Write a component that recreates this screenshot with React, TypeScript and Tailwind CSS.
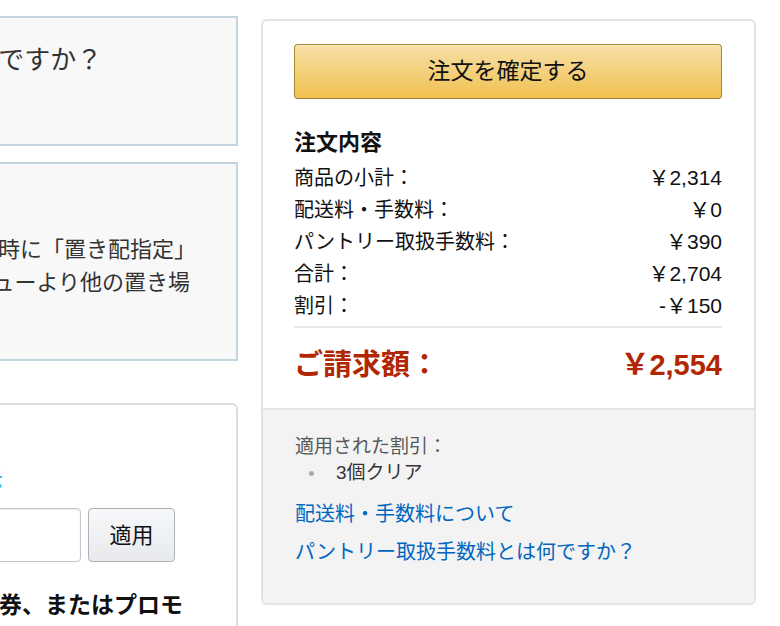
import React from "react";

const font = { fontFamily: "'Liberation Sans', 'Noto Sans CJK JP', sans-serif" };

function Row({ label, value }: { label: string; value: string }) {
  return (
    <div className="flex h-[32px] items-center justify-between">
      <span className="text-[20px] text-[#111]">{label}</span>
      <span className="text-[21px] text-[#111]">{value}</span>
    </div>
  );
}

export default function App() {
  return (
    <div style={font} className="flex h-[626px] w-[780px] overflow-hidden bg-white">
      {/* left column (partly off-screen) */}
      <div className="-ml-[240px] flex w-[478px] shrink-0 flex-col pt-[16px]">
        <div className="h-[130px] shrink-0 border-2 border-[#c3d6e0] bg-[#f8f8f8] pl-[27px] pt-[24px]">
          <div className="whitespace-nowrap text-[26px] leading-[36px] text-[#333]">パントリーとは何ですか？</div>
        </div>

        <div className="mt-[16px] shrink-0 border-2 border-[#c3d6e0] bg-[#f8f8f8] pb-[27px] pl-[39px] pt-[16px] text-[22px] leading-[33px] text-[#333]">
          <div className="mb-[20px] whitespace-nowrap font-bold">置き配について</div>
          <div className="-ml-[23px] whitespace-nowrap">ご希望の場合は、注文時に「置き配指定」</div>
          <div className="-ml-[6px] whitespace-nowrap">を選択するか、メニューより他の置き場</div>
          <div className="whitespace-nowrap">所を選択。</div>
        </div>

        <div className="mt-[42px] h-[260px] shrink-0 overflow-hidden rounded-[6px] border-2 border-[#dddddd] bg-white pl-[18px] pt-[14px]">
          <div className="whitespace-nowrap text-[22px] font-bold leading-[30px] text-[#111]">割引</div>
          <div className="ml-[3px] mt-[16px] whitespace-nowrap text-[22px] leading-[30px] text-[#2bb4dc]">クーポンの詳細を表示</div>
          <div className="mt-[13px] flex items-center gap-[7px]">
            <div className="h-[54px] w-[301px] rounded-[4px] border border-[#c5c5c5] bg-white shadow-[inset_0_1px_2px_rgba(0,0,0,0.08)]" />
            <button className="h-[54px] w-[87px] rounded-[4px] border border-[#adb1b8] bg-linear-to-b from-[#f7f8fa] to-[#e7e9ec] text-[22px] text-[#111]">
              適用
            </button>
          </div>
          <div className="ml-[12px] mt-[27px] whitespace-nowrap text-[23px] font-bold leading-[32px] text-[#111]">
            ご利用になるギフト券、またはプロモ
          </div>
          <div className="ml-[12px] whitespace-nowrap text-[23px] font-bold leading-[32px] text-[#111]">ーションコード</div>
        </div>
      </div>

      {/* right panel */}
      <div className="ml-[23px] mt-[19px] h-[586px] w-[495px] shrink-0 overflow-hidden rounded-[6px] border-2 border-[#e3e3e3] bg-white">
        <div className="pb-[22px] pl-[31px] pr-[32px] pt-[23px]">
          <button className="flex h-[55px] w-full items-center justify-center rounded-[4px] border border-[#a88734] border-b-[#9c7e31] bg-linear-to-b from-[#f7dfa5] to-[#f0c14b] text-[23px] text-[#111] shadow-[inset_0_1px_0_rgba(255,255,255,0.4)]">
            注文を確定する
          </button>
          <div className="mt-[29px] text-[22px] font-bold leading-[30px] text-[#111]">注文内容</div>
          <div className="mt-[4px]">
            <Row label="商品の小計：" value="￥2,314" />
            <Row label="配送料・手数料：" value="￥0" />
            <Row label="パントリー取扱手数料：" value="￥390" />
            <Row label="合計：" value="￥2,704" />
            <Row label="割引：" value="-￥150" />
          </div>
          <div className="mt-[4px] h-[2px] bg-[#e7e7e7]" />
          <div className="mt-[18px] flex h-[40px] items-center justify-between text-[29px] font-bold text-[#b12704]">
            <span>ご請求額：</span>
            <span>￥2,554</span>
          </div>
        </div>
        <div className="h-full border-t-2 border-[#e3e3e3] bg-[#f3f3f3] px-[32px] pt-[23px]">
          <div className="text-[19px] leading-[27px] text-[#565959]">適用された割引：</div>
          <div className="flex h-[27px] items-center text-[19px] text-[#333]">
            <span className="ml-[14px] h-[5px] w-[5px] rounded-full bg-[#aaaaaa]" />
            <span className="ml-[22px]">3個クリア</span>
          </div>
          <div className="mt-[12px] text-[20px] leading-[30px] text-[#0066c0]">配送料・手数料について</div>
          <div className="mt-[8px] text-[20px] leading-[30px] text-[#0066c0]">パントリー取扱手数料とは何ですか？</div>
        </div>
      </div>
    </div>
  );
}
